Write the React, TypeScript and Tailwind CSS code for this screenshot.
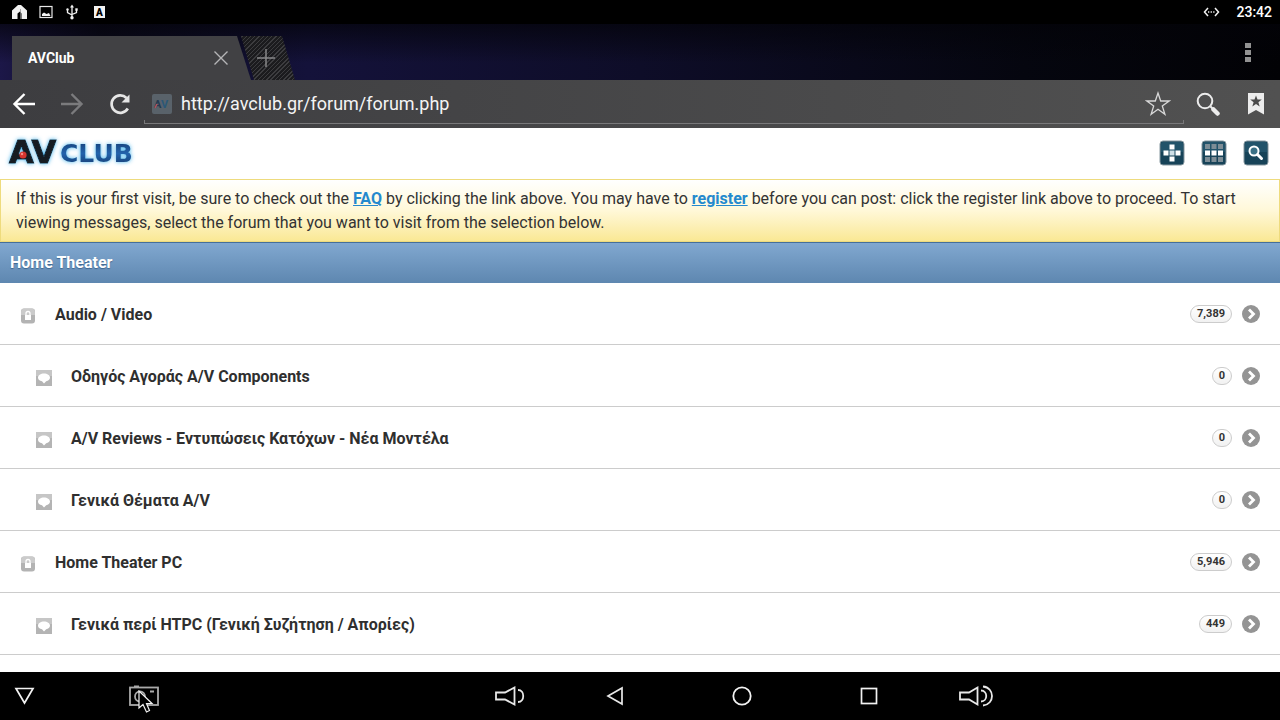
import { clsx } from 'clsx';

interface Forum {
  title: string;
  count: string;
  sub?: boolean;
}

const FORUMS: Forum[] = [
  { title: 'Audio / Video', count: '7,389' },
  { title: 'Οδηγός Αγοράς A/V Components', count: '0', sub: true },
  { title: 'A/V Reviews - Εντυπώσεις Κατόχων - Νέα Μοντέλα', count: '0', sub: true },
  { title: 'Γενικά Θέματα A/V', count: '0', sub: true },
  { title: 'Home Theater PC', count: '5,946' },
  { title: 'Γενικά περί HTPC (Γενική Συζήτηση / Απορίες)', count: '449', sub: true }
];

function StatusBar() {
  return (
    <div className="flex h-6 items-center justify-between bg-black pl-3 pr-2 text-white">
      <div className="flex items-center gap-3">
        <svg width="15" height="14" viewBox="0 0 15 14" fill="#f2f2f2">
          <path d="M0 14V5.500L6 0h3l6 5.500V14H9.500V8.500L8 6.500 5.500 8.500V14z" />
          <path d="M8.500 4v10" stroke="#888" strokeWidth=".7" />
        </svg>
        <svg width="14" height="14" viewBox="0 0 14 14" fill="none">
          <rect x="1" y="1.500" width="12" height="11" stroke="#e8e8e8" strokeWidth="1.200" />
          <path d="M3 11V9l2-1.500L7.500 9 10 8l1.500 3z" fill="#f2f2f2" />
        </svg>
        <svg width="14" height="16" viewBox="0 0 14 16" fill="none" stroke="#f2f2f2" strokeWidth="1.300">
          <path d="M7 2v12M2.500 6v2.500L7 11M11.500 6v2.500L7 10.500" />
          <path d="M5 3.500 7 .5l2 3z" fill="#f2f2f2" stroke="none" />
          <circle cx="7" cy="13.800" r="1.700" fill="#f2f2f2" stroke="none" />
          <circle cx="2.500" cy="5.500" r="1.200" fill="#f2f2f2" stroke="none" />
          <rect x="10.300" y="4.300" width="2.400" height="2.400" fill="#f2f2f2" stroke="none" />
        </svg>
        <span className="ml-[3px] flex h-3 w-[11px] items-center justify-center bg-[#f2f2f2] text-[10px] font-black text-black">
          A
        </span>
      </div>
      <div className="flex items-center gap-4">
        <svg width="17" height="10" viewBox="0 0 17 10" fill="none" stroke="#f2f2f2" strokeWidth="1.500">
          <path d="M5 1 1.500 5 5 9M12 1l3.500 4L12 9" />
          <path d="M5 5h7" strokeDasharray="1.300 1.300" />
        </svg>
        <span className="text-sm font-medium">23:42</span>
      </div>
    </div>
  );
}

function TabStrip() {
  return (
    <div className="flex h-14 items-end justify-between bg-[linear-gradient(180deg,rgba(3,3,8,.7)_0%,transparent_70%),linear-gradient(90deg,#1c1748_0%,#0c0b1e_8%,#14123a_24%,#0e0d28_50%,#05060f_80%,#020205_100%)] pl-3">
      <div className="flex h-11">
        <div className="flex w-[239px] items-center justify-between bg-[#414144] pl-4 pr-[23px] [clip-path:polygon(0_0,225px_0,100%_100%,0_100%)]">
          <span className="text-sm font-bold text-white">AVClub</span>
          <button type="button" aria-label="Close tab">
            <svg width="14" height="14" viewBox="0 0 14 14" stroke="#b5b5b7" strokeWidth="1.400">
              <path d="M.5.5l13 13M13.500.5l-13 13" />
            </svg>
          </button>
        </div>
        <button
          type="button"
          aria-label="New tab"
          className="-ml-3 flex w-14 items-center justify-center bg-[repeating-linear-gradient(135deg,#1b1b1e_0px,#1b1b1e_2px,#3c3c3f_2px,#3c3c3f_3px)] pr-[2px] [clip-path:polygon(2px_0,43px_0,100%_100%,15px_100%)]"
        >
          <svg width="18" height="18" viewBox="0 0 18 18" stroke="#88888a" strokeWidth="1.500">
            <path d="M9 0v18M0 9h18" />
          </svg>
        </button>
      </div>
      <button type="button" aria-label="Menu" className="mb-[18px] mr-[29px] flex flex-col gap-[2px]">
        <span className="h-[5px] w-[6px] bg-[#929292]" />
        <span className="h-[5px] w-[6px] bg-[#929292]" />
        <span className="h-[5px] w-[6px] bg-[#929292]" />
      </button>
    </div>
  );
}

function Toolbar() {
  return (
    <div className="flex h-12 items-center bg-linear-to-r from-[#3d3d40] to-[#515151] px-3">
      <button type="button" aria-label="Back">
        <svg width="24" height="24" viewBox="0 0 24 24" fill="none" stroke="#fff" strokeWidth="2.400">
          <path d="M12.500 2 2.500 12l10 10M2.500 12H23" />
        </svg>
      </button>
      <button type="button" aria-label="Forward" className="ml-6">
        <svg width="24" height="24" viewBox="0 0 24 24" fill="none" stroke="#7b7b7d" strokeWidth="2.400">
          <path d="M11.500 2l10 10-10 10M21.500 12H1" />
        </svg>
      </button>
      <button type="button" aria-label="Reload" className="ml-6">
        <svg width="24" height="24" viewBox="0 0 24 24" fill="none" stroke="#e6e6e6" strokeWidth="2.700">
          <path d="M19.800 16.500A8.700 8.700 0 1 1 18.500 6" />
          <path d="M21.500 2.500v8H13.500z" fill="#e6e6e6" stroke="none" />
        </svg>
      </button>
      <form className="ml-3 flex h-10 flex-1 items-center border-x border-b border-[#78787a] pl-[7px] [border-image:linear-gradient(to_top,#78787a_4px,transparent_4px)_1]">
        <svg width="20" height="20" viewBox="0 0 20 20" className="shrink-0">
          <rect width="20" height="20" rx="2" fill="#59626a" />
          <g fontFamily="Roboto, sans-serif" fontSize="11" fontWeight="700">
            <text x="2" y="14" fill="#243a50">A</text>
            <text x="9" y="14" fill="#2a5878">V</text>
          </g>
          <path d="M3 14l2-4" stroke="#b5525c" strokeWidth="1.600" />
        </svg>
        <input
          type="text"
          aria-label="Address"
          defaultValue="http://avclub.gr/forum/forum.php"
          className="ml-[9px] min-w-0 flex-1 bg-transparent text-lg text-[#f4f4f4] outline-none"
        />
        <button type="button" aria-label="Bookmark this page" className="mr-3">
          <svg width="26" height="26" viewBox="0 0 26 26" fill="none" stroke="#d8d8d8" strokeWidth="1.300">
            <path d="M13 2l2.700 8h8.400l-6.800 5 2.600 8.300-6.900-5-6.900 5L8.700 15 1.900 10h8.400z" />
          </svg>
        </button>
      </form>
      <button type="button" aria-label="Search" className="ml-3">
        <svg width="24" height="24" viewBox="0 0 24 24" fill="none" stroke="#ececec">
          <circle cx="9" cy="9" r="7.300" strokeWidth="2" />
          <path d="M14.500 14.500l3 3" strokeWidth="2" />
          <path d="M17.500 17.500l4 4" strokeWidth="4.500" strokeLinecap="round" />
        </svg>
      </button>
      <button type="button" aria-label="Bookmarks" className="ml-6">
        <svg width="24" height="24" viewBox="0 0 24 24">
          <path d="M4 1h16v21.500l-8-4.500-8 4.500z" fill="#ececec" />
          <path d="M12 3.500l1.500 4h4.300l-3.400 2.700 1.300 4.300-3.700-2.600-3.700 2.600 1.300-4.300-3.400-2.700h4.300z" fill="#4a4a4a" />
        </svg>
      </button>
    </div>
  );
}

function Logo() {
  return (
    <svg width="136" height="36" viewBox="0 0 136 36" role="img" aria-label="AVClub">
      <defs>
        <filter id="glow" x="-10%" y="-30%" width="120%" height="160%">
          <feDropShadow dx="0" dy="0" stdDeviation="2" floodColor="#3fb0ea" floodOpacity="1" />
        </filter>
        <linearGradient id="club" x1="0" y1="0" x2="0" y2="1">
          <stop offset="0" stopColor="#133a70" />
          <stop offset=".5" stopColor="#2463ac" />
          <stop offset="1" stopColor="#123768" />
        </linearGradient>
      </defs>
      <g filter="url(#glow)" fontFamily="DejaVu Sans, sans-serif" fontWeight="700">
        <text x="5" y="28" fontSize="32" fill="#141c24" stroke="#141c24" strokeWidth="1">AV</text>
        <text x="56" y="27" fontSize="25" fill="url(#club)">CLUB</text>
      </g>
      <circle cx="19" cy="20" r="3.600" fill="#d5352f" />
      <circle cx="18" cy="19" r="1.200" fill="#f58b84" />
    </svg>
  );
}

function HeaderIcon({ label, children }: { label: string; children: React.ReactNode }) {
  return (
    <button type="button" aria-label={label}>
      <svg width="26" height="26" viewBox="0 0 26 26">
        <rect x="1" y="1" width="24" height="24" rx="3" fill="#174358" stroke="#8798a0" />
        <path d="M2 4a2 2 0 0 1 2-2h18a2 2 0 0 1 2 2v8H2z" fill="#22536a" />
        {children}
      </svg>
    </button>
  );
}

function SiteHeader() {
  return (
    <header className="flex h-[51px] items-center justify-between bg-white pb-[2px] pl-1 pr-[11px]">
      <a href="#top">
        <Logo />
      </a>
      <div className="flex gap-4">
        <HeaderIcon label="Actions">
          <path d="M10.500 4.500h5v5h-5zM4.500 10.500h5v5h-5zM16.500 10.500h5v5h-5zM10.500 16.500h5v5h-5z" fill="#fff" />
          <path d="M10.500 10.500h5v5h-5z" fill="#cfe0e8" />
        </HeaderIcon>
        <HeaderIcon label="Menu">
          <path d="M4 4h5v5H4zM10.500 4h5v5h-5zM17 4h5v5h-5zM4 17h5v5H4zM10.500 17h5v5h-5zM17 17h5v5h-5z" fill="#7d8d96" />
          <path d="M4 10.500h5v5H4zM10.500 10.500h5v5h-5zM17 10.500h5v5h-5z" fill="#fff" />
        </HeaderIcon>
        <HeaderIcon label="Search">
          <circle cx="11" cy="11" r="4.500" fill="#3a7085" stroke="#fff" strokeWidth="2" />
          <path d="M14.500 14.500l4 4" stroke="#fff" strokeWidth="3" strokeLinecap="round" />
        </HeaderIcon>
      </div>
    </header>
  );
}

function Notice() {
  return (
    <p className="border border-[#eedb7d] bg-linear-to-b from-white via-[#fff8d8] to-[#fae894] px-[15px] pb-[6px] pt-[7px] text-base leading-6 text-[#333]">
      If this is your first visit, be sure to check out the{' '}
      <a href="#faq" className="font-bold text-[#2489ce] underline">FAQ</a> by clicking the link above. You may have
      to <a href="#register" className="font-bold text-[#2489ce] underline">register</a> before you can post: click
      the register link above to proceed. To start viewing messages, select the forum that you want to visit from the
      selection below.
    </p>
  );
}

function LockIcon() {
  return (
    <svg width="16" height="16" viewBox="0 0 16 16">
      <rect x="1" y=".5" width="14" height="15" rx="3" fill="#b3b3b3" />
      <path d="M1 4a3.500 3.500 0 0 1 3.500-3.500h7A3.500 3.500 0 0 1 15 4v3H1z" fill="#cbcbcb" />
      <path d="M6 7.500V5.500a2 2 0 0 1 4 0v2" fill="none" stroke="#fff" strokeWidth="1.300" />
      <rect x="5" y="7" width="6" height="5" fill="#fff" />
    </svg>
  );
}

function BubbleIcon() {
  return (
    <svg width="16" height="16" viewBox="0 0 16 16">
      <rect width="16" height="16" fill="#b4b4b4" />
      <rect width="16" height="6" fill="#c6c6c6" />
      <path d="M8 3.500c3.300 0 6 1.700 6 4s-1.800 3.300-3.800 3.800L8 13.500l-2-2.200C3.600 10.900 2 9.500 2 7.500c0-2.300 2.700-4 6-4z" fill="#fff" />
    </svg>
  );
}

function ForumRow({ forum }: { forum: Forum }) {
  return (
    <li className="border-b border-[#ccc]">
      <a href="#forum" className={clsx('flex h-[61px] items-center pr-5 pt-1', forum.sub ? 'pl-9' : 'pl-5')}>
        {forum.sub ? <BubbleIcon /> : <LockIcon />}
        <span className="mb-[2px] ml-[19px] flex-1 text-base font-bold text-[#2f2f2f]">{forum.title}</span>
        <span className="mb-1 mr-[10px] rounded-full border border-[#ccc] bg-linear-to-b from-white to-[#f1f1f1] px-[6px] text-[11px] leading-4 font-bold text-[#333]">
          {forum.count}
        </span>
        <svg width="18" height="18" viewBox="0 0 18 18" className="mb-1">
          <circle cx="9" cy="9" r="9" fill="#949494" />
          <path d="M7 4.500 11.500 9 7 13.500" fill="none" stroke="#fff" strokeWidth="2.800" />
        </svg>
      </a>
    </li>
  );
}

function NavBar() {
  return (
    <nav className="flex h-12 items-center justify-between bg-black pl-3 pr-[286px]">
      <div className="flex items-center gap-[92px]">
        <button type="button" aria-label="Hide bar">
          <svg width="24" height="24" viewBox="0 0 24 24" fill="none" stroke="#f2f2f2" strokeWidth="1.700">
            <path d="M4 4.500h17L12.500 19z" />
          </svg>
        </button>
        <button type="button" aria-label="Screenshot" className="relative">
          <svg width="32" height="24" viewBox="0 0 32 24" fill="none" stroke="#aaa" strokeWidth="1.800">
            <rect x="2" y="3.500" width="28" height="17.500" />
            <circle cx="12" cy="12.500" r="5" />
            <path d="M6 2.500h5M22 7.500h4" />
          </svg>
          <svg width="16" height="24" viewBox="0 0 16 24" className="absolute left-[10px] top-[6px]">
            <path d="M1 1v17l4-3.500 3.500 7.500 3-1.500-3-7H14z" fill="#000" stroke="#f2f2f2" strokeWidth="1.200" />
          </svg>
        </button>
      </div>
      <div className="flex items-center gap-20">
        <button type="button" aria-label="Volume down">
          <svg width="32" height="24" viewBox="0 0 32 24" fill="none" stroke="#e8e8e8" strokeWidth="1.800">
            <path d="M2 8.500h9l9.500-5v17l-9.500-5H2z" />
            <path d="M24 6c7 0 7 12 0 12" />
          </svg>
        </button>
        <button type="button" aria-label="Back">
          <svg width="18" height="24" viewBox="0 0 18 24" fill="none" stroke="#e8e8e8" strokeWidth="1.700">
            <path d="M16 4v16L2 12z" />
          </svg>
        </button>
        <button type="button" aria-label="Home" className="ml-7">
          <svg width="20" height="24" viewBox="0 0 20 24" fill="none" stroke="#f2f2f2" strokeWidth="1.800">
            <circle cx="10" cy="12" r="8.700" />
          </svg>
        </button>
        <button type="button" aria-label="Recent apps" className="ml-7">
          <svg width="18" height="24" viewBox="0 0 18 24" fill="none" stroke="#f2f2f2" strokeWidth="1.700">
            <rect x="1.500" y="4.500" width="15" height="15" />
          </svg>
        </button>
        <button type="button" aria-label="Volume up">
          <svg width="36" height="24" viewBox="0 0 36 24" fill="none" stroke="#e8e8e8" strokeWidth="1.800">
            <path d="M2 8.500h9l8.500-5v17l-8.500-5H2z" />
            <path d="M23 6.500c7 0 7 11 0 11M25 2.500c12 1 12 18 0 19" />
          </svg>
        </button>
      </div>
    </nav>
  );
}

export default function App() {
  return (
    <div className="flex min-h-screen flex-col bg-white font-[Roboto,'Noto_Sans',sans-serif]">
      <StatusBar />
      <TabStrip />
      <Toolbar />
      <main className="flex-1">
        <SiteHeader />
        <Notice />
        <h2 className="flex h-[41px] items-center border-t border-[#456f9a] bg-linear-to-b from-[#81a8d0] to-[#5e87b0] px-[10px] text-base font-bold text-white [text-shadow:0_1px_1px_#3e6790]">
          Home Theater
        </h2>
        <ul>
          {FORUMS.map(forum => (
            <ForumRow key={forum.title} forum={forum} />
          ))}
        </ul>
      </main>
      <NavBar />
    </div>
  );
}
